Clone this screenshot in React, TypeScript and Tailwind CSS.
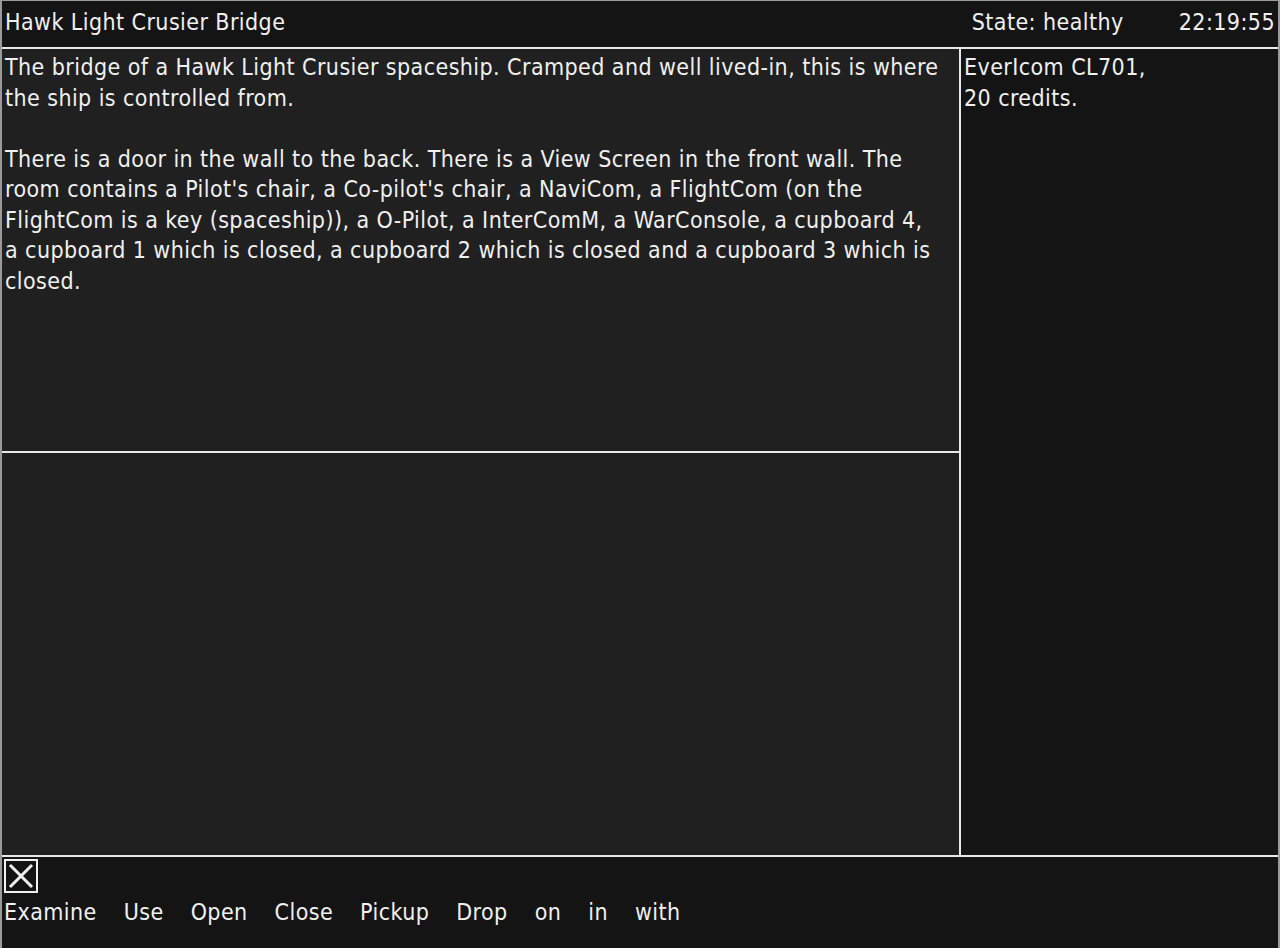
import React from "react";

const commands = ["Examine", "Use", "Open", "Close", "Pickup", "Drop", "on", "in", "with"];

const para1 = [
  "The bridge of a Hawk Light Crusier spaceship. Cramped and well lived-in, this is where",
  "the ship is controlled from.",
];

const para2 = [
  "There is a door in the wall to the back. There is a View Screen in the front wall. The",
  "room contains a Pilot's chair, a Co-pilot's chair, a NaviCom, a FlightCom (on the",
  "FlightCom is a key (spaceship)), a O-Pilot, a InterComM, a WarConsole, a cupboard 4,",
  "a cupboard 1 which is closed, a cupboard 2 which is closed and a cupboard 3 which is",
  "closed.",
];

const App = () => {
  return (
    <div
      className="w-[1280px] h-[948px] flex flex-col bg-[#141414] text-[#f0f0f0] border-l-2 border-r-2 border-t border-[#9a9a9a] overflow-hidden tracking-[0.42px]"
      style={{ fontFamily: '"DejaVu Sans Condensed", "DejaVu Sans", sans-serif' }}
    >
      {/* header */}
      <div className="h-[46px] flex items-center pl-[3px] pr-[3px] pb-[4px] text-[23px] shrink-0">
        <div className="flex-1">Hawk Light Crusier Bridge</div>
        <div className="w-[207px]">State: healthy</div>
        <div>22:19:55</div>
      </div>
      <div className="h-[2px] bg-[#e8e8e8] shrink-0" />

      {/* main area */}
      <div className="flex h-[806px] shrink-0">
        <div className="w-[957px] flex flex-col">
          <div className="h-[402px] bg-[#202020] pl-[3px] pt-[3px] text-[23px] leading-[30.5px] whitespace-nowrap">
            <p>
              {para1.map((l) => (
                <span key={l} className="block">{l}</span>
              ))}
            </p>
            <p className="mt-[30.5px]">
              {para2.map((l) => (
                <span key={l} className="block">{l}</span>
              ))}
            </p>
          </div>
          <div className="h-[2px] bg-[#e8e8e8]" />
          <div className="flex-1 bg-[#202020]" />
        </div>
        <div className="w-[2px] bg-[#e8e8e8]" />
        <div className="flex-1 bg-[#141414] px-[3px] pt-[3px] text-[23px] leading-[30.5px]">
          <div>EverIcom CL701,</div>
          <div>20 credits.</div>
        </div>
      </div>
      <div className="h-[2px] bg-[#e8e8e8] shrink-0" />

      {/* bottom bar */}
      <div className="flex-1 px-[2px] pt-[2px]">
        <div className="w-[34px] h-[34px] border-2 border-[#f0f0f0] flex items-center justify-center">
          <svg width="26" height="26" viewBox="0 0 26 26">
            <path d="M2 2 L24 24 M24 2 L2 24" stroke="#f0f0f0" strokeWidth="3" />
          </svg>
        </div>
        <div className="flex gap-[27px] text-[23px] leading-[30px] mt-[4px]">
          {commands.map((c) => (
            <span key={c}>{c}</span>
          ))}
        </div>
      </div>
    </div>
  );
};

export default App;
